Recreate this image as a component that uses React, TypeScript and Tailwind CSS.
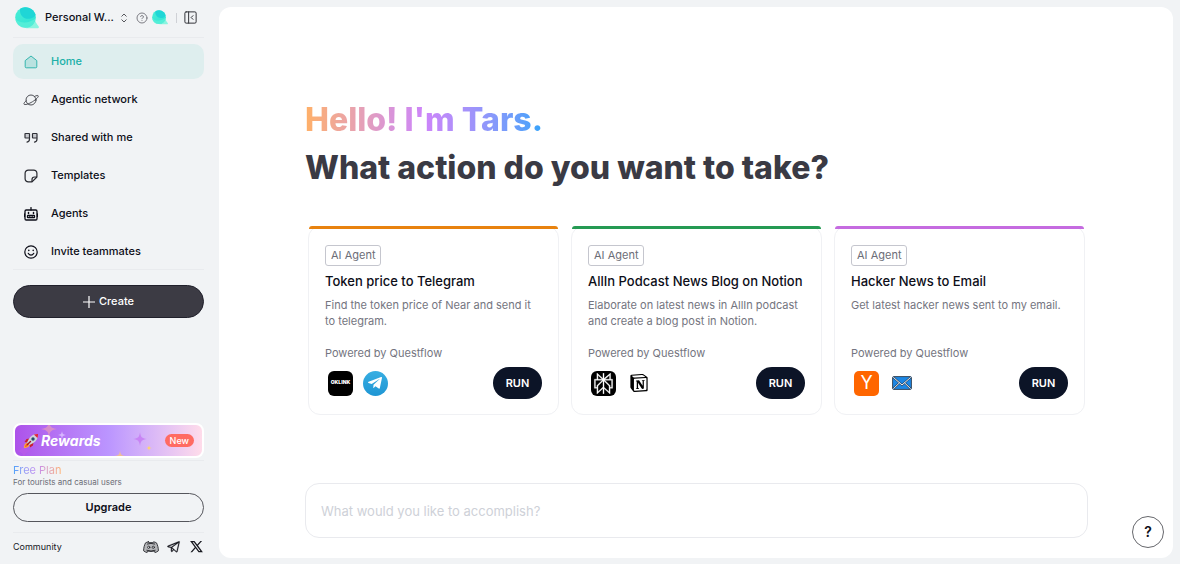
import React from 'react';
import { PanelLeftClose, CircleHelp } from 'lucide-react';
import { FaTelegramPlane } from 'react-icons/fa';
import { SiPerplexity, SiNotion } from 'react-icons/si';
import { PiTelegramLogo } from 'react-icons/pi';
import { RiTwitterXLine } from 'react-icons/ri';

function BubbleLogo({ id, className }: { id: string; className: string }) {
  return (
    <svg viewBox="0 0 24 22" className={className} aria-hidden="true">
      <defs>
        <linearGradient id={id} x1="0" y1="0" x2="0.8" y2="1">
          <stop offset="0" stopColor="#4aeed6" />
          <stop offset="1" stopColor="#2fe3d4" />
        </linearGradient>
      </defs>
      <path d="M19 11 C20.500 15 22 17.500 23.600 19.300 C24.300 20.600 23.500 21.300 22.500 21.300 H11Z" fill="#8af5e0" />
      <circle cx="10.500" cy="10.500" r="10.300" fill={`url(#${id})`} />
      <path d="M5.200 1.800 C4 7 8 11.800 13 11.800 C17 11.800 20 10 20.500 7.500 A10.300 10.300 0 0 0 5.200 1.800Z" fill="#1fd6d6" />
      <path d="M.4 12 C4 16.500 15 17 20.600 11 C20 17 16 20.800 10.500 20.800 C5 20.800 1 17 .4 12Z" fill="#5df0d8" opacity=".75" />
    </svg>
  );
}

function HomeIcon() {
  return (
    <svg viewBox="0 0 14 14" className="size-3.5" fill="#b9e2e0" stroke="#35b5ae" strokeWidth="1" strokeLinejoin="round" aria-hidden="true">
      <path d="M1.200 5.600 7 1l5.800 4.600v6.200a1 1 0 0 1-1 1H2.200a1 1 0 0 1-1-1Z" />
    </svg>
  );
}

function PlanetIcon() {
  return (
    <svg viewBox="0 0 16 14" className="h-3.5 w-4" fill="none" stroke="#3c3d44" strokeWidth=".9" strokeLinecap="round" aria-hidden="true">
      <circle cx="8" cy="7" r="5" />
      <path d="M11.600 3.400C13.500 2.500 14.900 2.200 15.200 2.800c.6 1-2 3.600-5.700 5.900S1.700 12.200 1 11.200c-.4-.7.500-2 2.200-3.500" />
    </svg>
  );
}

function QuotesIcon() {
  return (
    <svg viewBox="0 0 14 14" className="size-3.5" fill="none" stroke="#303138" strokeWidth="1.200" strokeLinejoin="round" strokeLinecap="round" aria-hidden="true">
      <path d="M1 2.500h4.500v4.500H1ZM8.500 2.500H13v4.500H8.500Z" fill="#c9cbd0" stroke="none" />
      <path d="M5.500 7H1.500a.5.5 0 0 1-.5-.5V3a.5.5 0 0 1 .5-.5H5a.5.5 0 0 1 .5.5v5c0 1.700-.8 2.800-2.500 3.200M13 7H9a.5.5 0 0 1-.5-.5V3a.5.5 0 0 1 .5-.5h3.500a.5.5 0 0 1 .5.500v5c0 1.700-.8 2.800-2.500 3.200" />
    </svg>
  );
}

function StickerIcon() {
  return (
    <svg viewBox="0 0 14 14" className="size-3.5" fill="none" stroke="#26272e" strokeWidth="1.200" strokeLinejoin="round" aria-hidden="true">
      <path d="M8 12.900H4.300A3.200 3.200 0 0 1 1.100 9.700V4.300A3.200 3.200 0 0 1 4.300 1.100h5.400A3.200 3.200 0 0 1 12.900 4.300V8L8 12.900Z" />
      <path d="M12.900 8h-2.400A2.500 2.500 0 0 0 8 10.500v2.400" />
    </svg>
  );
}

function RobotIcon() {
  return (
    <svg viewBox="0 0 14 14" className="size-3.5" fill="none" stroke="currentColor" strokeWidth="1.300" strokeLinecap="round" aria-hidden="true">
      <rect x="1" y="3" width="12" height="10" rx="1.200" />
      <path d="M7 .6V3M.5 7v2.500M13.500 7v2.500" />
      <path d="M4.500 5.600v.8M9.500 5.600v.8" strokeWidth="1.500" />
      <rect x="3.500" y="8.500" width="7" height="2.200" rx=".4" />
      <path d="M5.800 8.500v2M8.200 8.500v2" strokeWidth="1" />
    </svg>
  );
}

function SmileIcon() {
  return (
    <svg viewBox="0 0 14 14" className="size-3.5" fill="none" stroke="currentColor" strokeWidth="1.200" strokeLinecap="round" aria-hidden="true">
      <circle cx="7" cy="7" r="6.200" />
      <path d="M4.200 8.300c1 2.300 4.600 2.300 5.600 0" />
      <path d="M4.800 5.200v.3M9.200 5.200v.3" strokeWidth="1.500" />
    </svg>
  );
}

function RocketIcon() {
  return (
    <svg viewBox="0 0 16 16" className="size-4 shrink-0" aria-hidden="true">
      <path d="M1 15c0-3 1-5 3-5.500L6.500 12C6 14 4 15 1 15Z" fill="#ffb02e" />
      <path d="M2 14c.2-1.800 1-3 2.200-3.200l1 1C5 13 3.800 13.800 2 14Z" fill="#f8532d" />
      <path d="M7 5.500 3.500 6 1.500 9l3.500.5ZM10.500 9l-.5 3.500-3 2-.5-3.500Z" fill="#c8202f" />
      <path d="M15 1c-4-.2-7 1.500-9 4.700L4 9.500 6.500 12l3.800-2C13.500 8 15.200 5 15 1Z" fill="#cfd3da" />
      <path d="M15 1c-1.500-.1-2.900.1-4.100.6l3.500 3.500C14.900 3.900 15.100 2.500 15 1Z" fill="#e0243c" />
      <circle cx="10" cy="6" r="1.700" fill="#24506e" />
      <path d="m7.500 8.500-3 3" stroke="#a3182a" strokeWidth="1.400" strokeLinecap="round" />
    </svg>
  );
}

function DiscordIcon() {
  return (
    <svg viewBox="0 0 16 14" className="h-3.5 w-4" fill="#b4b5b8" stroke="#26272b" strokeWidth=".9" strokeLinejoin="round" strokeLinecap="round" aria-hidden="true">
      <path d="M5.500 1.800 6 2.800q2-.4 4 0l.5-1c1.200.2 2.200.6 3 1.100 1.200 2.400 1.900 5 1.900 7.900-.9.900-2.200 1.400-3.500 1.700l-.9-1.500q-3 .8-6 0l-.9 1.500C2.800 12.200 1.500 11.700.6 10.800.6 7.900 1.300 5.300 2.500 2.900c.8-.5 1.800-.9 3-1.100Z" />
      <path d="M3.800 10.300q4.200 1.800 8.400 0M4.300 4q3.700-1.300 7.400 0" fill="none" />
      <circle cx="5.700" cy="7.300" r="1.100" fill="#f1f3f5" />
      <circle cx="10.300" cy="7.300" r="1.100" fill="#f1f3f5" />
    </svg>
  );
}

function MailIcon() {
  return (
    <svg viewBox="0 0 20 14" className="h-3.5 w-5" aria-hidden="true">
      <rect x=".6" y=".6" width="18.800" height="12.800" rx="1.200" fill="#1b87e6" stroke="#3b4a5c" />
      <path d="m1.300 12.800 6.200-6M18.700 12.800l-6.200-6M1.300 1.300 10 9l8.700-7.700" fill="none" stroke="#33475e" strokeWidth="1.900" />
      <path d="m1.300 12.800 6.200-6M18.700 12.800l-6.200-6M1.300 1.300 10 9l8.700-7.700" fill="none" stroke="#e8f1fa" strokeWidth="1" />
    </svg>
  );
}

function Sparkles() {
  const star = 'M0-8C1-2 2-1 8 0 2 1 1 2 0 8-1 2-2 1-8 0-2-1-1-2 0-8Z';
  return (
    <svg viewBox="0 0 187 31" preserveAspectRatio="none" className="absolute inset-0 size-full" aria-hidden="true">
      <path d={star} transform="translate(34 4)" fill="#e79bb9" opacity=".7" />
      <path d={star} transform="translate(47 10) scale(.5)" fill="#d7b5ff" />
      <path d={star} transform="translate(125 14) scale(.85)" fill="#c77cf3" opacity=".85" />
      <path d={star} transform="translate(134 23) scale(.35)" fill="#ffd66b" />
      <path d={star} transform="translate(105 31) scale(.65)" fill="#eebd98" />
      <path d={star} transform="translate(9 26)" fill="#b95bea" opacity=".7" />
    </svg>
  );
}

const navItems = [
  { label: 'Home', icon: <HomeIcon />, active: true },
  { label: 'Agentic network', icon: <PlanetIcon /> },
  { label: 'Shared with me', icon: <QuotesIcon /> },
  { label: 'Templates', icon: <StickerIcon /> },
  { label: 'Agents', icon: <RobotIcon /> },
  { label: 'Invite teammates', icon: <SmileIcon /> },
];

function Sidebar() {
  return (
    <aside className="flex w-[219px] shrink-0 flex-col pr-[15px] pl-[13px]">
      <header className="flex h-[38px] items-center border-b border-[#e9ebee] pb-0.5">
        <BubbleLogo id="logo-large" className="ml-0.5 h-[22px] w-6 shrink-0" />
        <button type="button" className="ml-1.5 flex items-center gap-1.5 text-[11px] font-medium whitespace-nowrap">
          Personal W...
          <svg viewBox="0 0 8 10" className="h-2.5 w-2" fill="none" stroke="#45464c" strokeWidth=".9" aria-hidden="true">
            <path d="M1.500 3.500 4 1l2.500 2.500M1.500 6.500 4 9l2.500-2.500" />
          </svg>
        </button>
        <button type="button" aria-label="Help" className="ml-2 text-[#707178]">
          <CircleHelp className="size-3" strokeWidth={1.8} />
        </button>
        <BubbleLogo id="logo-small" className="ml-1 h-[15px] w-4 shrink-0" />
        <span className="ml-2 h-2.5 w-px bg-[#cfd1d6]" />
        <button type="button" aria-label="Collapse sidebar" className="ml-1.5 text-[#33343a]">
          <PanelLeftClose className="size-[15px]" strokeWidth={1.6} />
        </button>
      </header>

      <nav className="mt-1.5 flex flex-col gap-[3px] border-b border-[#e9ebee]">
        {navItems.map((item) => (
          <a
            key={item.label}
            href="#"
            className={
              item.active
                ? 'flex h-[35px] items-center gap-3 rounded-[10px] bg-[#deeeee] pl-2.5 text-[11px] font-medium text-[#20b0a8]'
                : 'flex h-[35px] items-center gap-3 rounded-[10px] pl-2.5 text-[11px] font-medium text-[#0d0e18]'
            }
          >
            <span className="flex size-4 items-center justify-center">{item.icon}</span>
            {item.label}
          </a>
        ))}
      </nav>

      <button type="button" className="mt-[15px] flex h-[33px] items-center justify-center gap-1 rounded-full border border-[#20202b] bg-[#3c3b44] text-[11px] font-medium text-white">
        <svg viewBox="0 0 12 12" className="size-3" stroke="currentColor" strokeWidth="1.200" aria-hidden="true">
          <path d="M6 0v12M0 6h12" />
        </svg>
        Create
      </button>

      <div className="mt-auto border-b border-[#e9ebee] pb-0.5">
        <a href="#" className="relative flex h-[35px] items-center overflow-hidden rounded-lg border-2 border-white bg-linear-to-r from-[#ad52ea] via-[#bb95ff] to-[#ffdcea] px-2">
          <Sparkles />
          <span className="relative flex w-full items-center gap-0.5">
            <RocketIcon />
            <span className="text-sm font-bold text-white italic">Rewards</span>
            <span className="ml-auto rounded-full bg-[#ff6b62] px-[5px] text-[9px] leading-[13px] font-medium text-white">New</span>
          </span>
        </a>
      </div>

      <div className="pt-0.5">
        <p className="w-fit bg-linear-to-r from-[#4ba3fa] via-[#c58bf0] to-[#ffb070] bg-clip-text text-[11px] leading-[14px] text-transparent">Free Plan</p>
        <p className="text-[8px] leading-[10px] text-[#6c6d75]">For tourists and casual users</p>
      </div>
      <button type="button" className="mt-1.5 h-[29px] rounded-full border border-[#55565c] text-[11px] font-semibold text-[#0d0e18]">Upgrade</button>

      <footer className="mt-2.5 flex h-8 items-center border-t border-[#e9ebee] pb-1">
        <a href="#" className="text-[9px] text-[#17181f]">Community</a>
        <span className="ml-auto flex items-center gap-2 text-[#17181f]">
          <a href="#" aria-label="Discord"><DiscordIcon /></a>
          <a href="#" aria-label="Telegram"><PiTelegramLogo className="size-3.5" stroke="currentColor" strokeWidth={5} /></a>
          <a href="#" aria-label="X"><RiTwitterXLine className="size-[15px]" /></a>
        </span>
      </footer>
    </aside>
  );
}

const agents = [
  {
    title: 'Token price to Telegram',
    text: 'Find the token price of Near and send it to telegram.',
    bar: 'bg-[#e8820e]',
    apps: [
      <span key="oklink" className="flex size-[25px] items-center justify-center rounded-md bg-black text-[5px] font-black text-white">OKLINK</span>,
      <span key="telegram" className="flex size-[25px] items-center justify-center rounded-full bg-linear-to-b from-[#37aee2] to-[#1e96d4] pr-0.5 text-white">
        <FaTelegramPlane className="size-4" />
      </span>,
    ],
  },
  {
    title: 'AllIn Podcast News Blog on Notion',
    text: 'Elaborate on latest news in AllIn podcast and create a blog post in Notion.',
    bar: 'bg-[#259a53]',
    apps: [
      <span key="perplexity" className="flex size-[25px] items-center justify-center rounded-md bg-black text-white">
        <SiPerplexity className="size-[21px]" stroke="currentColor" strokeWidth={0.4} />
      </span>,
      <span key="notion" className="flex size-[25px] items-center justify-center text-black">
        <SiNotion className="size-[18px]" />
      </span>,
    ],
  },
  {
    title: 'Hacker News to Email',
    text: 'Get latest hacker news sent to my email.',
    bar: 'bg-[#c56be0]',
    apps: [
      <span key="hn" className="flex size-[25px] items-center justify-center rounded-[5px] bg-[#ff6600] text-lg text-white">Y</span>,
      <span key="mail" className="flex size-[25px] items-center justify-center"><MailIcon /></span>,
    ],
  },
];

export default function App() {
  return (
    <div className="flex min-h-screen bg-[#f1f3f5] font-['Inter',sans-serif] text-[#0d0e18]">
      <Sidebar />
      <main className="mt-[7px] mr-[7px] mb-1.5 flex min-w-0 flex-1 flex-col rounded-xl bg-white pt-[89px] pr-[85px] pb-5 pl-[86px]">
        <h1 className="text-[32px] leading-[48px] font-extrabold text-[#3a3a44]">
          <span className="inline-block bg-linear-to-r from-[#ffb066] via-[#cd84fa] to-[#2ea3fb] bg-clip-text align-top text-transparent">Hello! I'm Tars.</span>
          <br />
          What action do you want to take?
        </h1>

        <section className="mt-[34px] grid grid-cols-3 gap-3 px-[3px]">
          {agents.map((agent) => (
            <article key={agent.title} className="relative rounded-xl border border-[#f0f1f4] px-4 pt-[18px] pb-[15px]">
              <div className={`absolute inset-x-0 -top-px h-[3px] rounded-t-sm ${agent.bar}`} />
              <span className="block w-fit rounded-[3px] border border-[#c5c6ce] px-[5px] text-[11px] leading-[19px] text-[#6c6d77]">AI Agent</span>
              <h2 className="mt-[5px] text-[13px] leading-5 font-medium whitespace-nowrap">{agent.title}</h2>
              <p className="mt-1.5 h-8 text-[11px] leading-4 text-[#747580]">{agent.text}</p>
              <p className="mt-4 text-[11px] leading-4 text-[#747580]">Powered by Questflow</p>
              <div className="mt-1.5 flex items-center gap-2.5 pl-[3px]">
                {agent.apps}
                <button type="button" className="ml-auto h-8 w-[49px] rounded-full bg-[#0c1427] text-[11px] font-semibold text-white">RUN</button>
              </div>
            </article>
          ))}
        </section>

        <input
          type="text"
          aria-label="What would you like to accomplish?"
          placeholder="What would you like to accomplish?"
          className="mt-auto h-[55px] w-full rounded-[14px] border border-[#e9eaee] bg-white px-[15px] text-[13px] outline-none placeholder:text-[#ced1d8]"
        />
      </main>
      <button type="button" aria-label="Support" className="fixed right-4 bottom-4 size-8 rounded-full border border-[#66676c] bg-white text-sm font-semibold">?</button>
    </div>
  );
}
